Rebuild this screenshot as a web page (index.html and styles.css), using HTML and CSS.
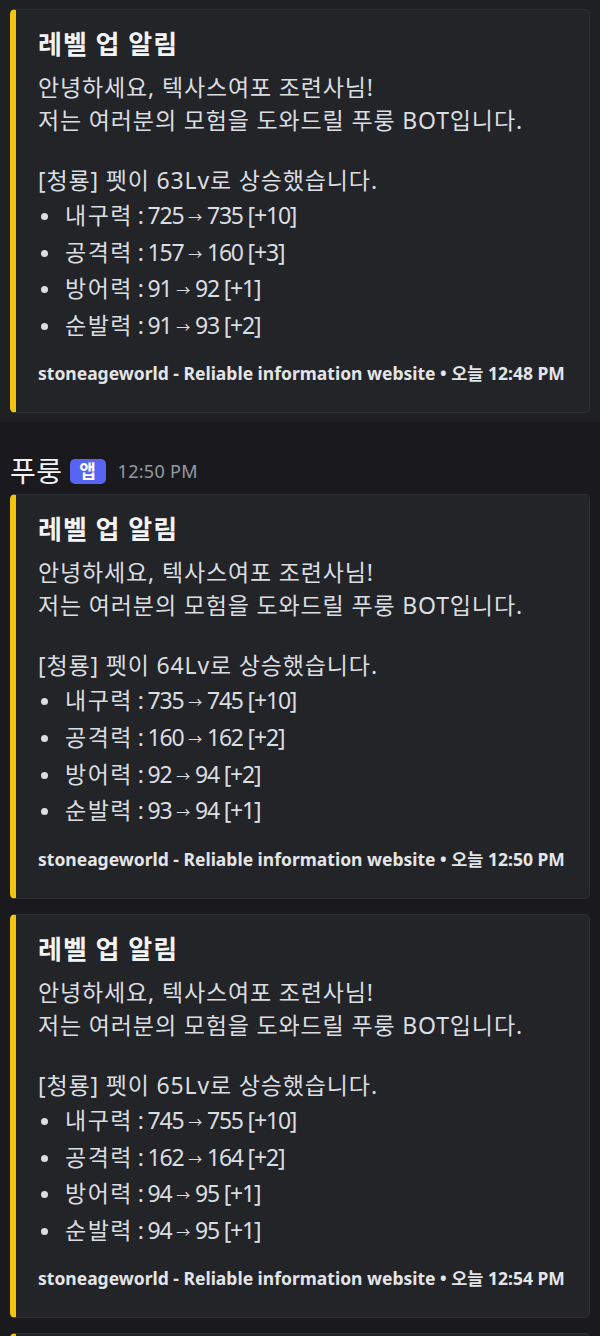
FILE: index.html
```html
<!DOCTYPE html>
<html lang="ko">
<head>
<meta charset="utf-8">
<link rel="stylesheet" href="styles.css">
</head>
<body>
<div class="msg msg-hover">
  <div class="card">
    <div class="title">레벨 업 알림</div>
    <p class="desc">안녕하세요, 텍사스여포 조련사님!<br>저는 여러분의 모험을 도와드릴 푸룽 BOT입니다.</p>
    <p class="desc gap">[청룡] 펫이 63Lv로 상승했습니다.</p>
    <ul class="stats">
      <li><span class="lbl">내구력</span> : 725 <span class="arr">→</span> 735 [+10]</li>
      <li><span class="lbl">공격력</span> : 157 <span class="arr">→</span> 160 [+3]</li>
      <li><span class="lbl">방어력</span> : 91 <span class="arr">→</span> 92 [+1]</li>
      <li><span class="lbl">순발력</span> : 91 <span class="arr">→</span> 93 [+2]</li>
    </ul>
    <div class="footer">stoneageworld - Reliable information website • 오늘 12:48 PM</div>
  </div>
</div>
<div class="msg msg-main">
  <div class="header">
    <span class="name">푸룽</span>
    <span class="badge">앱</span>
    <span class="time">12:50 PM</span>
  </div>
  <div class="card">
    <div class="title">레벨 업 알림</div>
    <p class="desc">안녕하세요, 텍사스여포 조련사님!<br>저는 여러분의 모험을 도와드릴 푸룽 BOT입니다.</p>
    <p class="desc gap">[청룡] 펫이 64Lv로 상승했습니다.</p>
    <ul class="stats">
      <li><span class="lbl">내구력</span> : 735 <span class="arr">→</span> 745 [+10]</li>
      <li><span class="lbl">공격력</span> : 160 <span class="arr">→</span> 162 [+2]</li>
      <li><span class="lbl">방어력</span> : 92 <span class="arr">→</span> 94 [+2]</li>
      <li><span class="lbl">순발력</span> : 93 <span class="arr">→</span> 94 [+1]</li>
    </ul>
    <div class="footer">stoneageworld - Reliable information website • 오늘 12:50 PM</div>
  </div>
  <div class="card">
    <div class="title">레벨 업 알림</div>
    <p class="desc">안녕하세요, 텍사스여포 조련사님!<br>저는 여러분의 모험을 도와드릴 푸룽 BOT입니다.</p>
    <p class="desc gap">[청룡] 펫이 65Lv로 상승했습니다.</p>
    <ul class="stats">
      <li><span class="lbl">내구력</span> : 745 <span class="arr">→</span> 755 [+10]</li>
      <li><span class="lbl">공격력</span> : 162 <span class="arr">→</span> 164 [+2]</li>
      <li><span class="lbl">방어력</span> : 94 <span class="arr">→</span> 95 [+1]</li>
      <li><span class="lbl">순발력</span> : 94 <span class="arr">→</span> 95 [+1]</li>
    </ul>
    <div class="footer">stoneageworld - Reliable information website • 오늘 12:54 PM</div>
  </div>
  <div class="card card-cut"></div>
</div>
</body>
</html>
```
FILE: styles.css
```css
* { box-sizing: border-box; }
html, body {
  margin: 0;
  padding: 0;
  background: #1a1a1e;
  height: 1336px;
  overflow: hidden;
}
body {
  font-family: "Noto Sans", "Noto Sans CJK KR", sans-serif;
  color: #dbdee1;
}
.msg-hover {
  background: #1f2023;
  padding: 9px 0 9px 0;
}
.msg-main {
  padding-top: 34px;
}
.header {
  display: flex;
  align-items: center;
  height: 30px;
  padding-left: 10px;
  margin-bottom: 8px;
}
.name {
  font-size: 28px;
  color: #f2f3f5;
  line-height: 30px;
  letter-spacing: 0.5px;
}
.badge {
  margin-left: 7px;
  background: #5865f2;
  color: #fff;
  font-size: 18px;
  font-weight: 700;
  line-height: 1;
  border-radius: 5px;
  width: 36px;
  height: 25px;
  display: flex;
  align-items: center;
  justify-content: center;
}
.time {
  margin-left: 12px;
  font-size: 18px;
  line-height: 1;
  color: #949ba4;
  letter-spacing: 0.3px;
}
.card {
  margin-left: 10px;
  width: 580px;
  background: #232428;
  border: 1px solid #2e2f34;
  border-left: 6px solid #f1c40f;
  border-radius: 5px;
  padding: 17px 16px 29px 22px;
  margin-bottom: 15px;
}
.msg-hover .card { margin-bottom: 0; }
.card-cut { height: 40px; }
.title {
  font-size: 26px;
  font-weight: 700;
  color: #f2f3f5;
  line-height: 34px;
  margin-bottom: 10px;
  letter-spacing: 1px;
}
.desc {
  margin: 0;
  font-size: 23px;
  line-height: 33px;
  letter-spacing: 0.85px;
}
.desc.gap { margin-top: 27px; }
.stats {
  margin: 0;
  padding: 0;
  list-style: none;
}
.stats li {
  position: relative;
  font-size: 23px;
  line-height: 33px;
  height: 33px;
  margin-top: 3.67px;
  padding-left: 27px;
  letter-spacing: -1.2px;
}
.stats li:first-child { margin-top: 2px; }
.stats li::before {
  content: "";
  position: absolute;
  left: 3px;
  top: 14px;
  width: 7px;
  height: 7px;
  border-radius: 50%;
  background: #dbdee1;
}
.lbl {
  letter-spacing: 1.5px;
}
.arr {
  font-size: 14px;
  line-height: 0;
  vertical-align: 2px;
  letter-spacing: 0;
}
.footer {
  margin-top: 21.5px;
  font-size: 17.5px;
  font-weight: 700;
  line-height: 20px;
  color: #e3e5e8;
  letter-spacing: 0;
}
```
